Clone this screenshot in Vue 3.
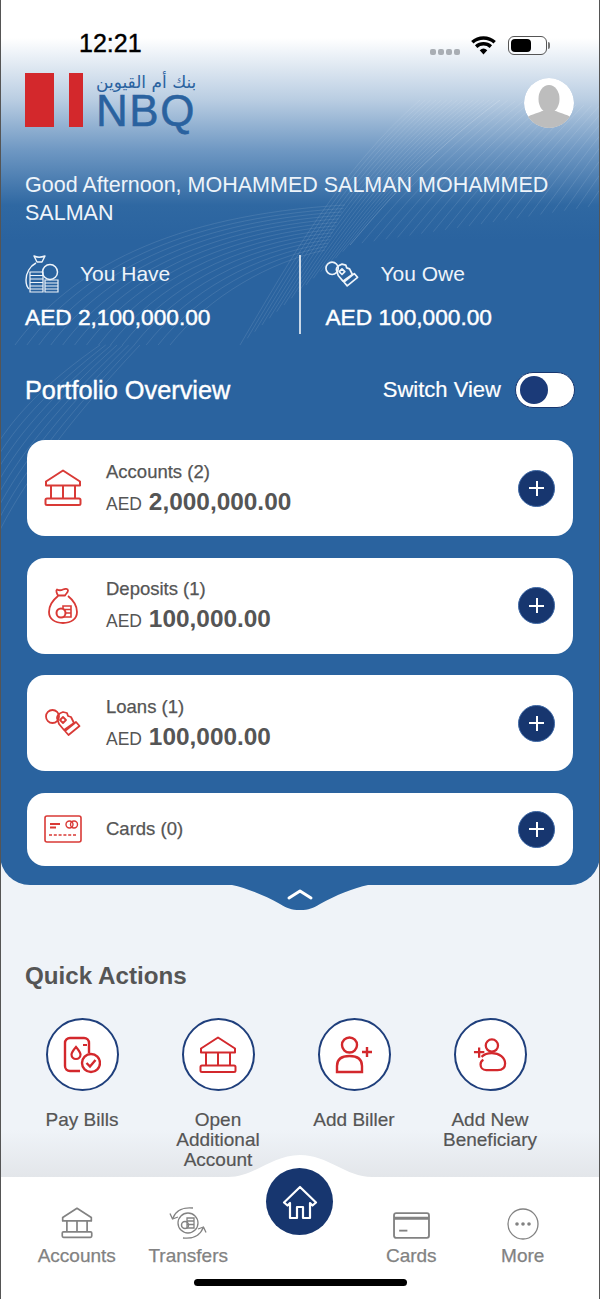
<template>
  <div class="app">
    <!-- shared icons -->
    <svg class="sprite" aria-hidden="true">
      <symbol id="bank" viewBox="0 0 38 38">
        <path d="M2 12.500 19 1.500l17 11v4H2zM7 16.500v13M19 16.500v13M31 16.500v13" fill="none" stroke="currentColor" stroke-width="2" stroke-linejoin="round" />
        <rect x="1.500" y="29.500" width="35" height="6.500" rx="1.500" fill="none" stroke="currentColor" stroke-width="2" />
      </symbol>
      <symbol id="bag" viewBox="0 0 30 38">
        <path d="M9 2.500c2 1 4 1 6 0 2-1 5-1 5 1 0 2-2 3-3 5h-7C9 7 7.500 3.500 9 2.500zM10 9c-5 4-9 10-9 16 0 7 6 11 14 11s14-4 14-11c0-6-4-12-9-16" fill="none" stroke="currentColor" stroke-width="1.800" stroke-linejoin="round" />
        <path d="M15 19h8v11h-8zM15 22.500h8M15 26h8" fill="none" stroke="currentColor" stroke-width="1.600" />
        <circle cx="13" cy="26" r="4.500" fill="#fff" stroke="currentColor" stroke-width="2" />
      </symbol>
      <symbol id="hand" viewBox="0 0 36 30">
        <circle cx="7.500" cy="8.500" r="6.500" fill="none" stroke="currentColor" stroke-width="1.800" />
        <path d="M12 10c0-3 3-5 6-6l4 1 1 3 3 1 3 6-10 7-5-6zM15 12l3-3 3 3-3 3zM20 23l11-9 3.500 4-11 9z" fill="none" stroke="currentColor" stroke-width="1.800" stroke-linejoin="round" />
      </symbol>
      <symbol id="card" viewBox="0 0 38 28">
        <rect x="1" y="1" width="36" height="26" rx="2" fill="none" stroke="currentColor" stroke-width="1.600" />
        <path d="M6 9h10M6 12.500h6" stroke="currentColor" stroke-width="1.800" />
        <circle cx="25.500" cy="9.500" r="3.500" fill="none" stroke="currentColor" stroke-width="1.400" />
        <circle cx="30" cy="9.500" r="3.500" fill="none" stroke="currentColor" stroke-width="1.400" />
        <path d="M5 20h28" stroke="currentColor" stroke-width="1.600" stroke-dasharray="3 1.800" />
      </symbol>
      <symbol id="bills" viewBox="0 0 38 38">
        <path d="M17 35H7a5 5 0 0 1-5-5V7a5 5 0 0 1 5-5h14a5 5 0 0 1 5 5v10" fill="none" stroke="currentColor" stroke-width="2.400" />
        <path d="M13 11c3 3.500 4.500 5.500 4.500 7.500a4.500 4.500 0 0 1-9 0c0-2 1.500-4 4.500-7.500zM20 9h4" fill="none" stroke="currentColor" stroke-width="2.200" />
        <circle cx="28" cy="27" r="9" fill="none" stroke="currentColor" stroke-width="2.400" />
        <path d="m23.500 27 3.500 3.500 5.500-6.500" fill="none" stroke="currentColor" stroke-width="2.400" />
      </symbol>
      <symbol id="biller" viewBox="0 0 38 38">
        <circle cx="14.500" cy="9" r="7.500" fill="none" stroke="currentColor" stroke-width="2.400" />
        <path d="M2 36V30c0-7 5-10 12.500-10S27 23 27 30v6zM27 16h10M32 11v10" fill="none" stroke="currentColor" stroke-width="2.400" />
      </symbol>
      <symbol id="beneficiary" viewBox="0 0 36 36">
        <circle cx="20" cy="8" r="6.500" fill="none" stroke="currentColor" stroke-width="2.400" />
        <path d="M9 20c3-3 7-4 11-4 8 0 14 5 14 11 0 5-3 7-8 7H14c-4 0-6-3-6-6 0-2 1-4 3-5M1 15h11M6.500 10v11" fill="none" stroke="currentColor" stroke-width="2.400" />
      </symbol>
    </svg>

    <section class="hero">
      <svg class="waves" viewBox="0 0 600 885" aria-hidden="true">
        <path v-for="(d, i) in wavePaths" :key="i" :d="d" />
      </svg>

      <div class="status">
        <span class="clock">12:21</span>
        <div class="status-right">
          <span class="signal"><i></i><i></i><i></i><i></i></span>
          <svg class="wifi" viewBox="0 0 26 20">
            <path d="M13 19.500 9 15a6 6 0 0 1 8 0zM6.500 12.500 4 9.800a13.500 13.500 0 0 1 18 0l-2.500 2.700a10 10 0 0 0-13 0zM2.500 8 0 5.300a19.500 19.500 0 0 1 26 0L23.500 8a16 16 0 0 0-21 0z" fill="#000" />
          </svg>
          <span class="battery"><span class="battery-level"></span></span>
        </div>
      </div>

      <div class="brand-row">
        <div class="logo">
          <span class="bar bar-wide"></span>
          <span class="bar bar-thin"></span>
          <div class="logo-text">
            <span class="logo-ar">بنك أم القيوين</span>
            <span class="logo-en">NBQ</span>
          </div>
        </div>
        <div class="avatar">
          <svg viewBox="0 0 50 50">
            <circle cx="25" cy="25" r="25" fill="#fff" />
            <ellipse cx="25" cy="21" rx="10.500" ry="14" fill="#bdbdbd" />
            <path d="M0 50V42c5-6 13-6 18-9h14c5 3 13 3 18 9v8z" fill="#bdbdbd" />
          </svg>
        </div>
      </div>

      <p class="greeting">Good Afternoon, MOHAMMED SALMAN MOHAMMED SALMAN</p>

      <div class="totals">
        <div class="total">
          <div class="total-head">
            <svg class="have-icon" viewBox="0 0 34 38">
              <path d="M9 1c3 1.500 7 1.500 11 0l-3 6h-5zM11 8C5 11 1 18 1 25c0 4 1 7 3 9" fill="none" stroke="currentColor" stroke-width="1.400" stroke-linejoin="round" />
              <circle cx="25" cy="17" r="7.500" fill="none" stroke="currentColor" stroke-width="1.500" />
              <path d="M5 17h13v20H5zM5 20.500h13M5 24h13M5 27.500h13M5 31h13M5 34h13M20 25h13v12H20zM20 28h13M20 31h13M20 34h13" fill="none" stroke="currentColor" stroke-width="1.200" />
            </svg>
            <span>You Have</span>
          </div>
          <strong>AED 2,100,000.00</strong>
        </div>
        <div class="total total-owe">
          <div class="total-head">
            <svg class="owe-icon"><use href="#hand" /></svg>
            <span>You Owe</span>
          </div>
          <strong>AED 100,000.00</strong>
        </div>
      </div>

      <div class="portfolio-head">
        <h2>Portfolio Overview</h2>
        <div class="switch-view">
          <span>Switch View</span>
          <span class="toggle"><span class="knob"></span></span>
        </div>
      </div>

      <div class="cards">
        <div v-for="item in portfolio" :key="item.label" class="card" :class="{ short: !item.amount }">
          <div class="card-icon">
            <svg :class="'ico-' + item.icon"><use :href="'#' + item.icon" /></svg>
          </div>
          <div class="card-body">
            <div class="card-label">{{ item.label }}</div>
            <div v-if="item.amount" class="card-amount"><span>AED</span> <b>{{ item.amount }}</b></div>
          </div>
          <span class="plus"></span>
        </div>
      </div>

      <svg class="notch" viewBox="0 0 136 26" aria-hidden="true">
        <path d="M0 0c14 3 32 10 48 19 7 4 11 6 20 6s13-2 20-6c16-9 34-16 48-19z" fill="#2a639f" />
        <path d="M57 13l11-7 11 7" fill="none" stroke="#fff" stroke-width="3" stroke-linecap="round" stroke-linejoin="round" />
      </svg>
    </section>

    <section class="quick">
      <h2>Quick Actions</h2>
      <div class="actions">
        <div v-for="a in actions" :key="a.icon + a.label" class="action">
          <div class="action-circle">
            <svg :class="'act-' + a.icon"><use :href="'#' + a.icon" /></svg>
          </div>
          <span>{{ a.label }}</span>
        </div>
      </div>
    </section>

    <nav class="tabbar">
      <svg class="hump" viewBox="0 0 144 24" aria-hidden="true">
        <path d="M0 23c26 0 44-22 72-22s46 22 72 22v1H0z" fill="#fff" />
      </svg>
      <div class="tab">
        <svg class="tab-bank"><use href="#bank" /></svg>
        <span>Accounts</span>
      </div>
      <div class="tab">
        <svg class="tab-transfers" viewBox="0 0 38 32">
          <circle cx="19" cy="16" r="10" fill="none" stroke="currentColor" stroke-width="1.300" />
          <path d="M18 11h7v10h-7zM18 14h7M18 17.500h7" fill="none" stroke="currentColor" stroke-width="1.300" />
          <circle cx="16" cy="18" r="3.500" fill="none" stroke="currentColor" stroke-width="1.500" />
          <path d="M24 1C15 0 7 3 4 11M1 6.500 3.500 12 9 10M14 31c9 1 17-2 20-10M37 25.500 34.500 20 29 22" fill="none" stroke="currentColor" stroke-width="1.300" />
        </svg>
        <span>Transfers</span>
      </div>
      <div class="tab tab-home">
        <button class="home" aria-label="Home">
          <svg viewBox="0 0 36 36">
            <path d="M18 3 2 18.500l3.500 3 2.500-2.500v15h7v-11h6v11h7V19l2.500 2.500 3.500-3z" fill="none" stroke="#fff" stroke-width="2.200" stroke-linejoin="round" />
          </svg>
        </button>
      </div>
      <div class="tab">
        <svg class="tab-card" viewBox="0 0 36 26">
          <rect x="1" y="1" width="34" height="24" rx="2" fill="none" stroke="currentColor" stroke-width="1.800" />
          <path d="M1 6h34" stroke="currentColor" stroke-width="3" />
          <path d="M6 18h8" stroke="currentColor" stroke-width="1.800" />
        </svg>
        <span>Cards</span>
      </div>
      <div class="tab">
        <svg class="tab-more" viewBox="0 0 32 32">
          <circle cx="16" cy="16" r="15" fill="none" stroke="currentColor" stroke-width="1.300" />
          <circle cx="10" cy="16" r="1.800" fill="currentColor" />
          <circle cx="16" cy="16" r="1.800" fill="currentColor" />
          <circle cx="22" cy="16" r="1.800" fill="currentColor" />
        </svg>
        <span>More</span>
      </div>
      <span class="home-indicator"></span>
    </nav>
  </div>
</template>

<script setup>
const portfolio = [
  { label: 'Accounts (2)', amount: '2,000,000.00', icon: 'bank' },
  { label: 'Deposits (1)', amount: '100,000.00', icon: 'bag' },
  { label: 'Loans (1)', amount: '100,000.00', icon: 'hand' },
  { label: 'Cards (0)', amount: '', icon: 'card' }
]

const actions = [
  { label: 'Pay Bills', icon: 'bills' },
  { label: 'Open Additional Account', icon: 'bank' },
  { label: 'Add Biller', icon: 'biller' },
  { label: 'Add New Beneficiary', icon: 'beneficiary' }
]

// background swoosh lines, interpolated between two edge curves
const lerp = (a, b, t) => a.map((v, i) => (v + (b[i] - v) * t).toFixed(1))

const family = (a, b, count) => {
  const out = []
  for (let i = 0; i < count; i++) {
    const p = lerp(a, b, i / (count - 1))
    out.push(`M${p[0]} ${p[1]}C${p[2]} ${p[3]} ${p[4]} ${p[5]} ${p[6]} ${p[7]}`)
  }
  return out
}

const wavePaths = [
  // steep lines rising to the top right
  ...family([240, 345, 290, 260, 340, 170, 420, 100], [350, 245, 380, 210, 420, 160, 500, 100], 16),
  ...family([350, 245, 380, 210, 420, 160, 500, 100], [600, 205, 610, 190, 630, 160, 660, 110], 22),
  // flat arcs under the greeting
  ...family([15, 345, 70, 270, 170, 215, 345, 205], [170, 345, 210, 295, 270, 262, 325, 250], 14),
  // lines running down the left edge
  ...family([0, 530, 20, 490, 60, 430, 140, 345], [0, 440, 20, 410, 50, 380, 100, 345], 8)
]
</script>

<style scoped>
.app {
  position: relative;
  width: 600px;
  height: 1299px;
  display: flex;
  flex-direction: column;
  overflow: hidden;
  background: #eff3f8;
  font-family: "Liberation Sans", Arial, sans-serif;
}

/* dark hairlines at the screenshot edges */
.app::before,
.app::after {
  content: '';
  position: absolute;
  top: 0;
  bottom: 0;
  width: 1px;
  background: #555;
  z-index: 5;
}

.app::before {
  left: 0;
}

.app::after {
  right: 0;
}

.sprite {
  position: absolute;
  width: 0;
  height: 0;
}

.hero {
  position: relative;
  height: 885px;
  flex-shrink: 0;
  padding: 0 26px 0 25px;
  box-sizing: border-box;
  border-radius: 0 0 30px 30px;
  background: linear-gradient(180deg, #fff 0, #fff 38px, #b9cde2 100px, #6f98c3 150px, #2f68a2 205px, #2a639f 240px);
  color: #fff;
}

.waves {
  position: absolute;
  left: 0;
  top: 0;
  width: 600px;
  height: 885px;
  fill: none;
  stroke: rgba(255, 255, 255, 0.1);
  stroke-width: 1;
  pointer-events: none;
}

.status {
  position: relative;
  height: 60px;
  display: flex;
  justify-content: space-between;
  align-items: flex-end;
  color: #000;
}

.clock {
  margin-left: 54px;
  font-size: 25px;
  line-height: 29px;
  margin-bottom: 2px;
  -webkit-text-stroke: 0.4px #000;
}

.status-right {
  display: flex;
  align-items: center;
  gap: 11px;
  margin-right: 27px;
  margin-bottom: 5px;
}

.signal {
  display: flex;
  gap: 2px;
  margin-top: 14px;
}

.signal i {
  width: 6px;
  height: 6px;
  border-radius: 2px;
  background: #a9aeb4;
}

.wifi {
  width: 25px;
  height: 19px;
  margin-right: 1px;
}

.battery {
  position: relative;
  width: 39px;
  height: 19px;
  box-sizing: border-box;
  padding: 2px;
  border: 1px solid #555;
  border-radius: 6px;
  background: rgba(255, 255, 255, 0.5);
}

.battery::after {
  content: '';
  position: absolute;
  right: -4px;
  top: 5px;
  width: 2px;
  height: 7px;
  border-radius: 0 2px 2px 0;
  background: #777;
}

.battery-level {
  display: block;
  width: 20px;
  height: 13px;
  border-radius: 4px;
  background: #000;
}

.brand-row {
  position: relative;
  display: flex;
  justify-content: space-between;
  align-items: flex-start;
  height: 54px;
  margin-top: 13px;
}

.logo {
  display: flex;
  height: 54px;
}

.bar {
  background: #d3282c;
  height: 54px;
}

.bar-wide {
  width: 29px;
  margin-right: 15px;
}

.bar-thin {
  width: 14px;
  margin-right: 13px;
}

.logo-text {
  display: flex;
  flex-direction: column;
  width: 100px;
  color: #2a629f;
  text-align: center;
}

.logo-ar {
  font-family: "DejaVu Sans", sans-serif;
  font-size: 17px;
  line-height: 19px;
  white-space: nowrap;
}

.logo-en {
  margin-top: 3px;
  font-size: 44px;
  line-height: 32px;
  white-space: nowrap;
  letter-spacing: 1.500px;
  -webkit-text-stroke: 0.5px #2a629f;
}

.avatar {
  width: 50px;
  height: 50px;
  margin-top: 5px;
  border-radius: 50%;
  overflow: hidden;
}

.avatar svg {
  display: block;
  width: 50px;
  height: 50px;
}

.greeting {
  position: relative;
  margin: 44px 0 0;
  font-size: 21.500px;
  line-height: 28px;
  color: #eef4fa;
}

.totals {
  position: relative;
  display: flex;
  margin-top: 28px;
  height: 79px;
}

.total {
  display: flex;
  flex-direction: column;
  width: 275px;
}

.total-owe {
  padding-left: 24px;
  border-left: 2px solid rgba(255, 255, 255, 0.75);
  box-sizing: border-box;
}

.total-head {
  display: flex;
  align-items: center;
  height: 38px;
  font-size: 21px;
  color: #eef4fa;
}

.have-icon {
  width: 34px;
  height: 38px;
  margin-right: 21px;
}

.owe-icon {
  width: 34px;
  height: 29px;
  margin-right: 21px;
}

.total strong {
  margin-top: 11px;
  font-size: 22.700px;
  line-height: 27px;
  font-weight: 400;
  -webkit-text-stroke: 0.45px #fff;
  white-space: nowrap;
}

.portfolio-head {
  position: relative;
  display: flex;
  justify-content: space-between;
  align-items: center;
  height: 36px;
  margin-top: 38px;
}

.portfolio-head h2 {
  margin: 0;
  font-size: 25.300px;
  font-weight: 400;
  -webkit-text-stroke: 0.4px #fff;
}

.switch-view {
  display: flex;
  align-items: center;
  gap: 14px;
  margin-right: -1px;
  font-size: 22px;
  -webkit-text-stroke: 0.2px #fff;
}

.toggle {
  display: flex;
  align-items: center;
  width: 60px;
  height: 36px;
  box-sizing: border-box;
  padding-left: 4px;
  border: 1px solid #17366f;
  border-radius: 18px;
  background: #fff;
}

.knob {
  width: 28px;
  height: 28px;
  border-radius: 50%;
  background: #1b3a78;
}

.cards {
  position: relative;
  display: flex;
  flex-direction: column;
  gap: 21.500px;
  margin: 32px 1px 0 2px;
}

.card {
  display: flex;
  align-items: center;
  height: 96px;
  border-radius: 18px;
  background: #fff;
  color: #555;
}

.card.short {
  height: 73px;
}

.card-icon {
  display: flex;
  justify-content: center;
  width: 72px;
  margin-right: 7px;
  color: #d93a36;
}

.ico-bank {
  width: 38px;
  height: 38px;
}

.ico-bag {
  width: 30px;
  height: 38px;
}

.ico-hand {
  width: 36px;
  height: 30px;
}

.ico-card {
  width: 38px;
  height: 28px;
}

.card-body {
  flex: 1;
}

.card:not(.short) .card-body {
  padding-top: 4px;
}

.card-label {
  font-size: 18.500px;
  line-height: 22px;
  -webkit-text-stroke: 0.25px #555;
}

.card-amount {
  margin-top: 3px;
  line-height: 32px;
  font-size: 17.500px;
  white-space: nowrap;
}

.card-amount b {
  margin-left: 2px;
  font-size: 24.400px;
}

.plus {
  position: relative;
  width: 37px;
  height: 37px;
  margin-right: 18px;
  box-sizing: border-box;
  border: 1px solid #3e68a5;
  border-radius: 50%;
  background: #17366f;
}

.plus::before,
.plus::after {
  content: '';
  position: absolute;
  left: 50%;
  top: 50%;
  background: #fff;
}

.plus::before {
  width: 15px;
  height: 2px;
  margin: -1px 0 0 -7.500px;
}

.plus::after {
  width: 2px;
  height: 15px;
  margin: -7.500px 0 0 -1px;
}

.notch {
  position: absolute;
  left: 232px;
  top: 885px;
  width: 136px;
  height: 26px;
}

.quick {
  flex: 1;
  background: linear-gradient(180deg, #eff3f8 0, #eff3f8 245px, #e3e6ea 292px);
  color: #555;
}

.quick h2 {
  margin: 76px 0 0 25px;
  font-size: 24.200px;
  line-height: 30px;
  font-weight: 700;
}

.actions {
  display: grid;
  grid-template-columns: repeat(4, 136px);
  margin: 27px 0 0 14px;
}

.action {
  display: flex;
  flex-direction: column;
  align-items: center;
  font-size: 19px;
  line-height: 20px;
  text-align: center;
}

.action span {
  width: 114px;
  -webkit-text-stroke: 0.2px #555;
}

.action-circle {
  display: flex;
  align-items: center;
  justify-content: center;
  width: 73px;
  height: 73px;
  margin-bottom: 19px;
  box-sizing: border-box;
  border: 2px solid #1f3f7c;
  border-radius: 50%;
  background: #fff;
  color: #d3282c;
}

.act-bills,
.act-biller,
.act-bank {
  width: 38px;
  height: 38px;
}

.act-beneficiary {
  width: 34px;
  height: 34px;
}

.tabbar {
  position: relative;
  flex-shrink: 0;
  display: grid;
  grid-template-columns: repeat(5, 111.500px);
  height: 122px;
  padding-left: 21px;
  background: #fff;
  color: #828282;
}

.hump {
  position: absolute;
  left: 228px;
  top: -23px;
  width: 144px;
  height: 24px;
}

.tab {
  display: flex;
  flex-direction: column;
  align-items: center;
  font-size: 19px;
  -webkit-text-stroke: 0.25px #828282;
}

.tab span {
  position: absolute;
  top: 69px;
  line-height: 20px;
}

.tab-bank {
  width: 32px;
  height: 32px;
  margin-top: 30px;
}

.tab-transfers {
  width: 38px;
  height: 32px;
  margin-top: 30px;
}

.tab-card {
  width: 37px;
  height: 27px;
  margin-top: 35px;
}

.tab-more {
  width: 32px;
  height: 32px;
  margin-top: 31px;
}

.tab-home {
  position: relative;
}

.home {
  position: absolute;
  top: -9px;
  width: 67px;
  height: 67px;
  display: flex;
  align-items: center;
  justify-content: center;
  padding: 0;
  border: 0;
  border-radius: 50%;
  background: #17366f;
}

.home svg {
  width: 36px;
  height: 36px;
}

.home-indicator {
  position: absolute;
  left: 194px;
  top: 102px;
  width: 213px;
  height: 7px;
  border-radius: 4px;
  background: #000;
}
</style>
